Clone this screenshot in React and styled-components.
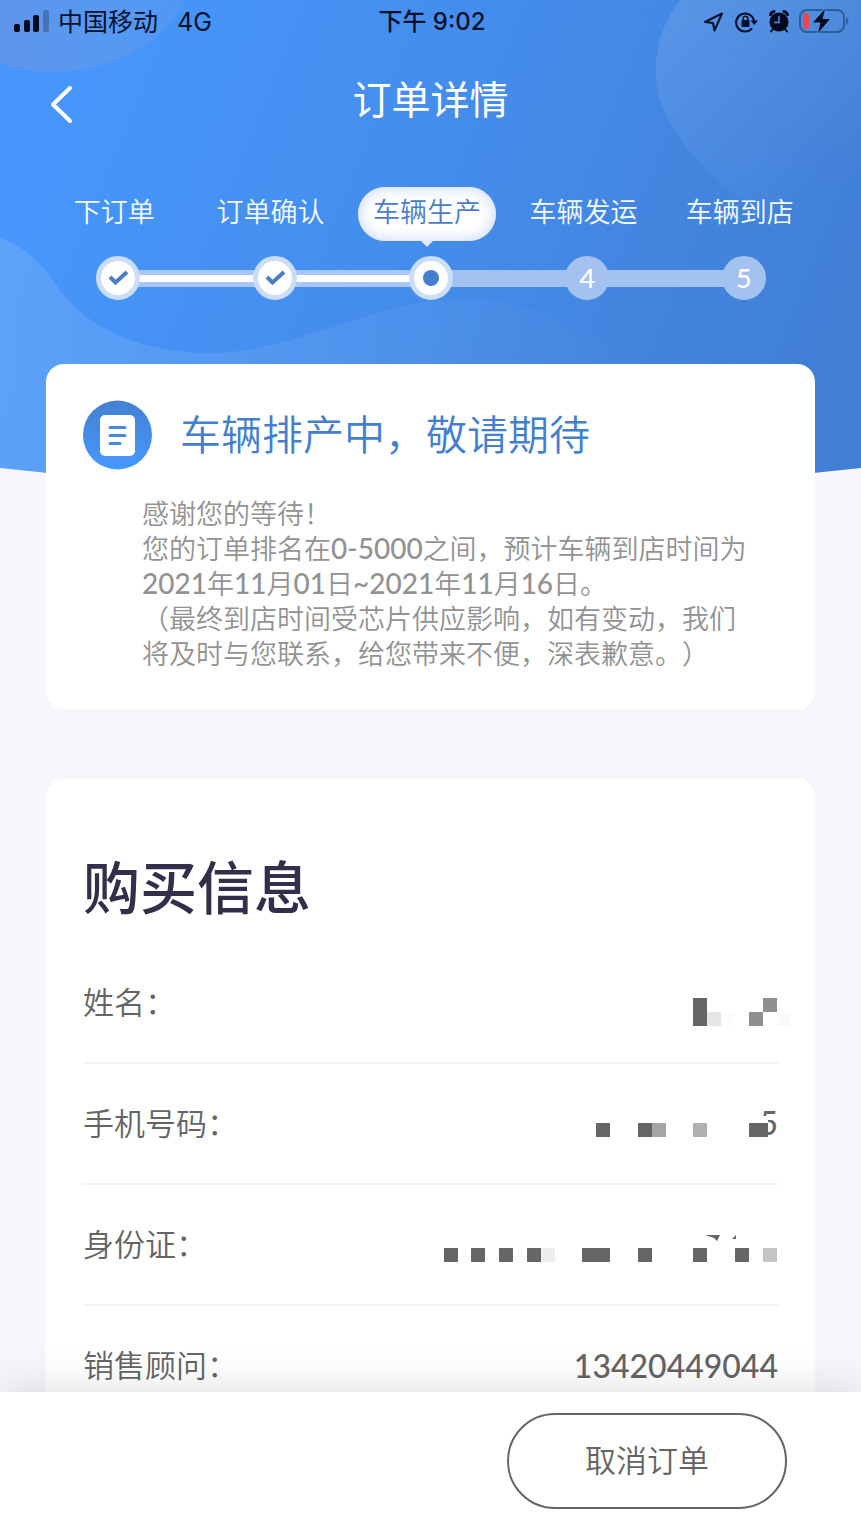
import React from 'react';
import styled, { createGlobalStyle, css } from 'styled-components';

const GlobalStyle = createGlobalStyle`
  * {
    box-sizing: border-box;
  }
  body {
    margin: 0;
    background: #f6f6fc;
    font-family: "Lato", "Noto Sans CJK SC", sans-serif;
    text-spacing-trim: space-all;
  }
`;

const Page = styled.div`
  display: flex;
  flex-direction: column;
  height: 100vh;
`;

const Content = styled.main`
  position: relative;
  flex: 1;
  min-height: 0;
  overflow-y: auto;
  scrollbar-width: none;
`;

const Backdrop = styled.svg`
  position: absolute;
  top: 0;
  left: 0;
  width: 100%;
  height: 520px;
`;

const Header = styled.header`
  position: relative;
  padding-bottom: 64px;
`;

const StatusBar = styled.div`
  display: grid;
  grid-template-columns: 1fr auto 1fr;
  align-items: center;
  height: 44px;
  padding: 0 11px 0 14px;
  color: #04102c;
  font-family: "Inter", "Noto Sans CJK SC", sans-serif;
  font-size: 25px;
  line-height: 44px;
`;

const Carrier = styled.div`
  display: flex;
  align-items: center;
  gap: 9px;
`;

const Network = styled.span`
  margin-left: 10px;
`;

const Clock = styled.time`
  font-size: 24px;
  font-weight: 500;
`;

const StatusIcons = styled.div`
  display: flex;
  align-items: center;
  justify-content: flex-end;
  gap: 10px;
`;

const Nav = styled.nav`
  display: grid;
  grid-template-columns: 1fr auto 1fr;
  align-items: center;
  height: 112px;
  padding: 0 38px;
`;

const BackButton = styled.button`
  width: 48px;
  height: 56px;
  padding: 0;
  border: 0;
  background: none;
  cursor: pointer;
`;

const Title = styled.h1`
  margin: 0;
  padding-bottom: 2px;
  color: #fff;
  font-size: 39px;
  font-weight: 400;
  line-height: 56px;
`;

const Steps = styled.ol`
  display: grid;
  grid-template-columns: repeat(5, 1fr);
  margin: 0;
  padding: 31px 39px 0 40px;
  list-style: none;
`;

const StepLabel = styled.div`
  display: flex;
  justify-content: center;
  padding-right: 8px;
  margin-bottom: 15px;
  color: #f4faff;
  font-size: 27px;
  font-weight: 350;
  line-height: 50px;
  white-space: nowrap;
`;

const LabelText = styled.span`
  height: 54px;

  ${props => props.$active && css`
    position: relative;
    padding: 0 15px;
    border-radius: 27px;
    background: #fff;
    box-shadow: inset 0 0 16px #c3d4f4;
    color: #4a7dc6;

    &::after {
      content: '';
      position: absolute;
      top: 100%;
      left: 50%;
      margin-left: -6px;
      border: 6px solid transparent;
      border-top-color: #e0eafb;
      border-bottom: 0;
    }
  `}
`;

const Track = styled.div`
  display: flex;
  align-items: center;
`;

const lineColors = {
  none: 'transparent',
  pending: '#a4c2ef',
  done: 'linear-gradient(#a6c6f7 5px, #fff 5px, #fff 12px, #a6c6f7 12px)',
};

const Line = styled.span`
  flex: 1;
  height: 17px;
  margin: ${props => (props.$side === 'left' ? '0 -5px 0 0' : '0 0 0 -5px')};
  background: ${props => lineColors[props.$kind]};
`;

const Node = styled.span`
  z-index: 1;
  display: flex;
  align-items: center;
  justify-content: center;
  width: 44px;
  height: 44px;
  border: 5px solid ${props => (props.$pending ? '#a4c2ef' : '#cbddf9')};
  border-radius: 50%;
  background: ${props => (props.$pending ? '#a4c2ef' : '#fff')};
  color: #fff;
  font-size: 27px;
  font-weight: 500;
  line-height: 34px;
`;

const Dot = styled.span`
  width: 16px;
  height: 16px;
  border-radius: 50%;
  background: #447fd0;
`;

const Card = styled.section`
  position: relative;
  margin: 0 46px 70px;
  padding: ${props => props.$padding};
  border-radius: 18px;
  background: #fff;
`;

const NoticeHead = styled.div`
  display: flex;
  align-items: center;
  gap: 27px;
  height: 70px;
`;

const NoticeTitle = styled.h2`
  margin: 0;
  color: #437fcd;
  font-size: 41px;
  font-weight: 350;
  line-height: 60px;
`;

const NoticeText = styled.p`
  margin: 26px 24px 0 59px;
  color: #929292;
  font-size: 27px;
  font-weight: 350;
  line-height: 35px;
`;

const Num = styled.span`
  font-size: 28px;
  font-weight: 500;
`;

const SectionTitle = styled.h2`
  margin: 0 0 21px;
  color: #322f4a;
  font-size: 57px;
  font-weight: 500;
  line-height: 70px;
`;

const InfoList = styled.dl`
  margin: 0;
`;

const InfoRow = styled.div`
  display: flex;
  align-items: center;
  justify-content: space-between;
  height: 121px;
  border-bottom: 2px solid #f4f4f4;
  color: #646464;
  font-size: 31px;
`;

const Label = styled.dt`
  padding-bottom: 5px;
  font-weight: 350;
`;

const Value = styled.dd`
  margin: 0;
  font-size: 32px;
  font-weight: 500;
`;

const Mosaic = styled.svg`
  display: block;
  overflow: visible;
`;

const BottomBar = styled.footer`
  z-index: 1;
  display: flex;
  justify-content: flex-end;
  padding: 21px 74px;
  background: #fff;
  box-shadow: 0 0 44px rgba(0, 0, 0, 0.14);
`;

const CancelButton = styled.button`
  width: 280px;
  height: 96px;
  padding: 0 0 6px;
  border: 2px solid #646464;
  border-radius: 48px;
  background: #fff;
  color: #646464;
  font-family: inherit;
  font-size: 31px;
  font-weight: 350;
  cursor: pointer;
`;

const steps = [
  { label: '下订单', state: 'done' },
  { label: '订单确认', state: 'done' },
  { label: '车辆生产', state: 'active' },
  { label: '车辆发运', state: 'pending' },
  { label: '车辆到店', state: 'pending' },
];

// x, y, width, height, color
const nameCells = [
  [253, 55, 14, 28, '#666'],
  [267, 69, 14, 14, '#e6e6e6'],
  [288, 69, 6, 14, '#fcfcfc'],
  [309, 69, 14, 14, '#8f8f8f'],
  [323, 55, 14, 14, '#8f8f8f'],
  [337, 69, 13, 14, '#fafafa'],
];

const phoneCells = [
  [156, 59, 14, 14, '#666'],
  [198, 59, 14, 14, '#666'],
  [212, 59, 14, 14, '#a5a5a5'],
  [253, 59, 14, 14, '#b0b0b0'],
  [309, 59, 19, 14, '#666'],
];

const idCells = [
  [4, 63, 14, 14, '#666'],
  [31, 63, 14, 14, '#666'],
  [59, 63, 14, 14, '#666'],
  [87, 63, 14, 14, '#666'],
  [101, 63, 14, 14, '#eee'],
  [142, 63, 28, 14, '#666'],
  [198, 63, 14, 14, '#666'],
  [253, 63, 14, 14, '#666'],
  [295, 63, 14, 14, '#666'],
  [323, 63, 14, 14, '#c4c4c4'],
];

const Masked = ({ cells, children }) => (
  <Mosaic width="338" height="119" role="img" aria-label="已隐藏">
    {children}
    {cells.map(([x, y, width, height, fill]) => (
      <rect key={`${x}-${y}`} x={x} y={y} width={width} height={height} fill={fill} />
    ))}
  </Mosaic>
);

const HeaderBackdrop = () => (
  <Backdrop viewBox="0 0 861 520" preserveAspectRatio="none" aria-hidden="true">
    <defs>
      <linearGradient id="sky" gradientUnits="userSpaceOnUse" x1="60" y1="120" x2="800" y2="420">
        <stop offset="0" stopColor="#4696fb" />
        <stop offset="0.5" stopColor="#448cea" />
        <stop offset="1" stopColor="#417fd5" />
      </linearGradient>
      <linearGradient id="wave" x1="0" y1="0" x2="1" y2="0">
        <stop offset="0" stopColor="#fff" stopOpacity="0.12" />
        <stop offset="0.6" stopColor="#fff" stopOpacity="0.05" />
        <stop offset="1" stopColor="#fff" stopOpacity="0" />
      </linearGradient>
      <linearGradient id="bubble" gradientUnits="userSpaceOnUse" x1="660" y1="40" x2="790" y2="230">
        <stop offset="0" stopColor="#fff" stopOpacity="0.1" />
        <stop offset="1" stopColor="#fff" stopOpacity="0" />
      </linearGradient>
      <linearGradient id="corner" x1="0" y1="0" x2="1" y2="0">
        <stop offset="0" stopColor="#9a90c4" stopOpacity="0.3" />
        <stop offset="1" stopColor="#9ab0d4" stopOpacity="0.12" />
      </linearGradient>
    </defs>
    <path fill="url(#sky)" d="M0 0H861V468Q430 516 0 468Z" />
    <path fill="url(#corner)" d="M0 0H184C166 44 108 72 55 72C34 72 15 69 0 63Z" />
    <path fill="url(#bubble)" d="M680 0C650 38 652 84 664 110C682 150 722 188 755 208C800 240 840 284 861 316V0Z" />
    <path
      fill="url(#wave)"
      d="M0 238C26 247 42 264 57 286C86 330 145 353 210 353C290 353 370 304 452 299C520 296 570 322 640 364V493Q300 502 0 468Z"
    />
  </Backdrop>
);

const SignalIcon = () => (
  <svg width="35" height="24" viewBox="0 0 35 24" fill="#020a1e">
    <rect x="0" y="14" width="6" height="8" rx="2" />
    <rect x="10" y="10" width="6" height="12" rx="2" />
    <rect x="19" y="5" width="6" height="17" rx="2" />
    <rect x="29" y="0" width="6" height="22" rx="2" opacity="0.25" />
  </svg>
);

const LocationIcon = () => (
  <svg width="21" height="24" viewBox="0 0 21 24" fill="none" stroke="#04102c" strokeWidth="2" strokeLinejoin="round">
    <path d="M1 12L18 3.500L10.500 20.500L9 13Z" />
  </svg>
);

const RotationLockIcon = () => (
  <svg width="24" height="24" viewBox="0 0 24 24" fill="none" stroke="#04102c" strokeWidth="2">
    <path d="M17 18.300A9 9 0 1 1 19 11" />
    <path d="M15.500 10.500H23L19.300 15Z" fill="#04102c" stroke="none" />
    <rect x="6.500" y="10" width="8" height="7" rx="1" fill="#04102c" stroke="none" />
    <path d="M8.200 10.500V8.500A2.300 2.300 0 0 1 12.800 8.500V10.500" strokeWidth="1.500" />
  </svg>
);

const AlarmIcon = () => (
  <svg width="20" height="24" viewBox="0 0 20 24" fill="none" stroke="#020a1e" strokeLinecap="round">
    <circle cx="10" cy="12" r="9.500" fill="#020a1e" stroke="none" />
    <path d="M1.500 4.500Q2.500 2 5 1.500" strokeWidth="3" />
    <path d="M15 1.500Q17.500 2 18.500 4.500" strokeWidth="3" />
    <path d="M4 19L2 21.500M16 19L18 21.500" strokeWidth="2" />
    <path d="M10 6.500V12.500H5.500" stroke="#4c8fe0" strokeWidth="1.500" />
  </svg>
);

const BatteryIcon = () => (
  <svg width="51" height="26" viewBox="0 0 51 26">
    <rect x="1" y="1" width="44" height="22" rx="7" fill="none" stroke="#2e5c99" strokeWidth="2" />
    <rect x="4" y="4" width="6" height="16" rx="3" fill="#ee4449" />
    <path d="M47 8Q52 12 47 16Z" fill="#2e5c99" />
    <path d="M26 0L14 13.500H21.500L19 24L31 10H23.500Z" fill="#020a1e" stroke="#4c8fe0" strokeWidth="2" paintOrder="stroke" />
  </svg>
);

const BackIcon = () => (
  <svg width="48" height="56" viewBox="0 0 48 56" fill="none" stroke="#fff" strokeWidth="4" strokeLinecap="round" strokeLinejoin="round">
    <path d="M32 16L15 32.500L32 49" />
  </svg>
);

const CheckIcon = () => (
  <svg width="24" height="20" viewBox="0 0 24 20" fill="none" stroke="#4a7dc6" strokeWidth="4">
    <path d="M4 9L9.500 14.500L21 4" />
  </svg>
);

const NoticeIcon = () => (
  <svg width="70" height="70" viewBox="0 0 70 70" aria-hidden="true">
    <defs>
      <linearGradient id="notice" x1="0" y1="0" x2="0" y2="1">
        <stop offset="0" stopColor="#4380d2" />
        <stop offset="1" stopColor="#4698fd" />
      </linearGradient>
    </defs>
    <circle cx="34.500" cy="35" r="34.500" fill="url(#notice)" />
    <rect x="17" y="15" width="35" height="41" rx="5" fill="#fff" />
    <path d="M27 27.500H42M27 35.500H42M27 43.500H37" stroke="#4787df" strokeWidth="3" strokeLinecap="round" />
  </svg>
);

const lineKind = (index) => {
  if (index < 1 || index >= steps.length) return 'none';
  return steps[index].state === 'pending' ? 'pending' : 'done';
};

const Step = ({ step, index }) => (
  <li aria-current={step.state === 'active' ? 'step' : undefined}>
    <StepLabel>
      <LabelText $active={step.state === 'active'}>{step.label}</LabelText>
    </StepLabel>
    <Track>
      <Line $side="left" $kind={lineKind(index)} />
      <Node $pending={step.state === 'pending'}>
        {step.state === 'done' && <CheckIcon />}
        {step.state === 'active' && <Dot />}
        {step.state === 'pending' && index + 1}
      </Node>
      <Line $side="right" $kind={lineKind(index + 1)} />
    </Track>
  </li>
);

const App = () => {
  return (
    <Page>
      <GlobalStyle />
      <Content>
        <HeaderBackdrop />
        <Header>
          <StatusBar>
            <Carrier>
              <SignalIcon />
              <span>中国移动</span>
              <Network>4G</Network>
            </Carrier>
            <Clock>下午 9:02</Clock>
            <StatusIcons>
              <LocationIcon />
              <RotationLockIcon />
              <AlarmIcon />
              <BatteryIcon />
            </StatusIcons>
          </StatusBar>
          <Nav>
            <BackButton type="button" aria-label="返回">
              <BackIcon />
            </BackButton>
            <Title>订单详情</Title>
          </Nav>
          <Steps>
            {steps.map((step, index) => (
              <Step key={step.label} step={step} index={index} />
            ))}
          </Steps>
        </Header>

        <Card $padding="36px 37px 38px">
          <NoticeHead>
            <NoticeIcon />
            <NoticeTitle>车辆排产中，敬请期待</NoticeTitle>
          </NoticeHead>
          <NoticeText>
            感谢您的等待！
            <br />
            您的订单排名在<Num>0-5000</Num>之间，预计车辆到店时间为
            <br />
            <Num>2021</Num>年<Num>11</Num>月<Num>01</Num>日<Num>~2021</Num>年<Num>11</Num>月<Num>16</Num>日。
            <br />
            （最终到店时间受芯片供应影响，如有变动，我们将及时与您联系，给您带来不便，深表歉意。）
          </NoticeText>
        </Card>

        <Card $padding="73px 37px">
          <SectionTitle>购买信息</SectionTitle>
          <InfoList>
            <InfoRow>
              <Label>姓名：</Label>
              <Value>
                <Masked cells={nameCells} />
              </Value>
            </InfoRow>
            <InfoRow>
              <Label>手机号码：</Label>
              <Value>
                <Masked cells={phoneCells}>
                  <text x="338" y="71" textAnchor="end" fill="#666">5</text>
                  <rect x="310" y="52" width="18" height="24" fill="#fff" />
                  <rect x="320" y="52" width="18" height="4" fill="#fff" />
                </Masked>
              </Value>
            </InfoRow>
            <InfoRow>
              <Label>身份证：</Label>
              <Value>
                <Masked cells={idCells}>
                  <path d="M265 50H280L277 56L274 53ZM292 54L296 50V54Z" fill="#666" />
                </Masked>
              </Value>
            </InfoRow>
            <InfoRow>
              <Label>销售顾问：</Label>
              <Value>13420449044</Value>
            </InfoRow>
          </InfoList>
        </Card>
      </Content>
      <BottomBar>
        <CancelButton type="button">取消订单</CancelButton>
      </BottomBar>
    </Page>
  );
};

export default App;
